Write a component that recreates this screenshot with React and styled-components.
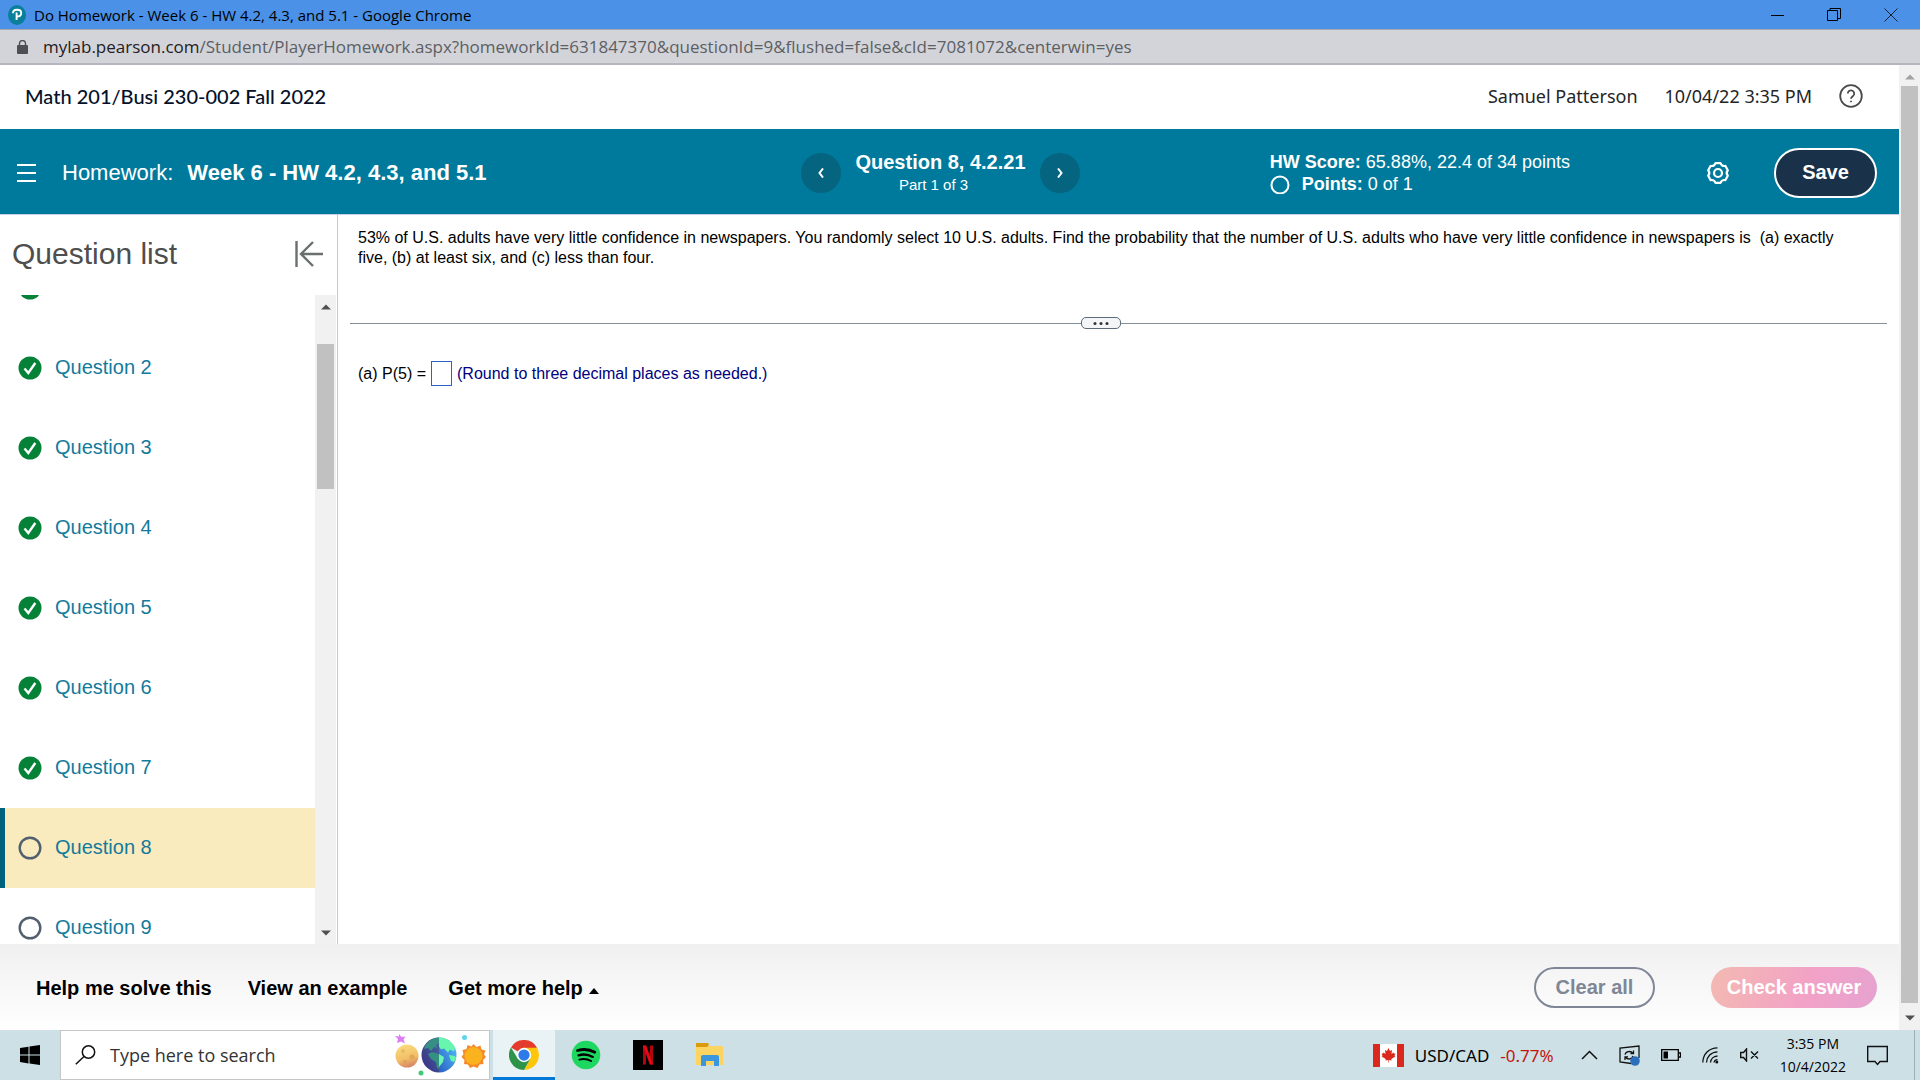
import { useLayoutEffect, useRef } from "react";
import styled, { createGlobalStyle } from "styled-components";

const questions = [
  { id: 1, done: true, clipped: true },
  { id: 2, done: true },
  { id: 3, done: true },
  { id: 4, done: true },
  { id: 5, done: true },
  { id: 6, done: true },
  { id: 7, done: true },
  { id: 8, current: true },
  { id: 9 },
];

function TitleBar() {
  return (
    <TitleRow>
      <svg width="18" height="20" viewBox="0 0 18 20">
        <ellipse cx="9" cy="10" rx="9" ry="10" fill="#0a7f9c" />
        <path d="M5 8.200C5 5.500 7 4.800 9 4.800c2.600 0 4.200 1.200 4.200 3.200 0 2.200-1.900 3.600-4.600 3.600M8.600 7.500V15" fill="none" stroke="#fff" strokeWidth="1.900" />
      </svg>
      <span>Do Homework - Week 6 - HW 4.2, 4.3, and 5.1 - Google Chrome</span>
      <WindowButtons>
        <IconButton aria-label="Minimize">
          <svg width="14" height="14" viewBox="0 0 14 14"><path d="M1 7.500h13" stroke="#000" /></svg>
        </IconButton>
        <IconButton aria-label="Restore">
          <svg width="14" height="14" viewBox="0 0 14 14" fill="none" stroke="#000"><path d="M.5 2.500h10v10H.5zM3 2V.500h10.500V10.500H11" /></svg>
        </IconButton>
        <IconButton aria-label="Close">
          <svg width="14" height="14" viewBox="0 0 14 14"><path d="M.5.500l13 13M13.500.500l-13 13" stroke="#123" /></svg>
        </IconButton>
      </WindowButtons>
    </TitleRow>
  );
}

function AddressBar() {
  return (
    <AddressRow>
      <svg width="11" height="14" viewBox="0 0 11 14">
        <rect y="5" width="11" height="9" rx="1" fill="#4c4f53" />
        <path d="M2.500 5.500V3.500a3 3 0 0 1 6 0v2" fill="none" stroke="#4c4f53" strokeWidth="1.400" />
      </svg>
      <p>
        <b>mylab.pearson.com</b>
        /Student/PlayerHomework.aspx?homeworkId=631847370&amp;questionId=9&amp;flushed=false&amp;cId=7081072&amp;centerwin=yes
      </p>
    </AddressRow>
  );
}

function CourseHeader() {
  return (
    <CourseRow>
      <Course>Math 201/Busi 230-002 Fall 2022</Course>
      <UserInfo>
        <span>Samuel Patterson</span>
        <span>10/04/22 3:35 PM</span>
        <IconButton aria-label="Help">
          <svg width="24" height="24" viewBox="0 0 24 24" fill="none" stroke="#4a4a4a" strokeWidth="1.800">
            <circle cx="12" cy="12" r="10.800" />
            <path d="M8.800 9.500a3.200 3.200 0 1 1 5 2.700c-1.200.8-1.800 1.200-1.800 2.600" />
            <circle cx="12" cy="17.500" r=".6" fill="#4a4a4a" strokeWidth="1" />
          </svg>
        </IconButton>
      </UserInfo>
    </CourseRow>
  );
}

function HomeworkBar() {
  return (
    <Band>
      <BandLeft>
        <IconButton aria-label="Menu">
          <svg width="19" height="18" viewBox="0 0 19 18" stroke="#fff" strokeWidth="2"><path d="M0 1h19M0 9h19M0 17h19" /></svg>
        </IconButton>
        <h1>
          <span>Homework:</span> Week 6 - HW 4.2, 4.3, and 5.1
        </h1>
      </BandLeft>
      <Pager>
        <RoundButton aria-label="Previous question">
          <svg width="8" height="10" viewBox="0 0 8 10"><path d="M6 .5L2.500 5 6 9.500" fill="none" stroke="#fff" strokeWidth="2" /></svg>
        </RoundButton>
        <PagerText>
          <strong>Question 8, 4.2.21</strong>
          <small>Part 1 of 3</small>
        </PagerText>
        <RoundButton aria-label="Next question">
          <svg width="8" height="10" viewBox="0 0 8 10"><path d="M2 .5L5.500 5 2 9.500" fill="none" stroke="#fff" strokeWidth="2" /></svg>
        </RoundButton>
      </Pager>
      <BandRight>
        <Score>
          <p><b>HW Score:</b> 65.88%, 22.4 of 34 points</p>
          <Points>
            <svg width="20" height="20" viewBox="0 0 20 20"><circle cx="10" cy="11" r="8.500" fill="none" stroke="#fff" strokeWidth="2" /></svg>
            <span><b>Points:</b> 0 of 1</span>
          </Points>
        </Score>
        <IconButton aria-label="Settings">
          <svg width="24" height="24" viewBox="0 0 24 24" fill="none" stroke="#fff" strokeWidth="2.200" strokeLinejoin="round">
            <path d="M9.530 2.100H14.470Q15.750 5.500 19.340 4.910L21.800 9.190Q19.500 12 21.800 14.810L19.340 19.090Q15.750 18.500 14.470 21.900H9.530Q8.250 18.500 4.660 19.090L2.200 14.810Q4.500 12 2.200 9.190L4.660 4.910Q8.250 5.500 9.530 2.100z" />
            <circle cx="12" cy="12" r="4" />
          </svg>
        </IconButton>
        <SaveButton>Save</SaveButton>
      </BandRight>
    </Band>
  );
}

function Status({ done }) {
  return (
    <svg width="24" height="24" viewBox="0 0 24 24">
      {done ? (
        <>
          <circle cx="12" cy="12" r="11.500" fill="#058238" />
          <path d="M6.500 12.500l3.800 4.500 7-10" fill="none" stroke="#fff" strokeWidth="2.400" />
        </>
      ) : (
        <circle cx="12" cy="12" r="10.300" fill="none" stroke="#525f6e" strokeWidth="2.400" />
      )}
    </svg>
  );
}

function Scrollbar({ before, thumb, after, muted, inset }) {
  return (
    <Track $inset={inset}>
      <svg width="10" height="6" viewBox="0 0 10 6"><path d="M0 5.500L5 .5l5 5z" fill={muted ? "#a3a3a3" : "#505050"} /></svg>
      <Rail>
        <Gap $grow={before} />
        <Thumb $grow={thumb} />
        <Gap $grow={after} />
      </Rail>
      <svg width="10" height="6" viewBox="0 0 10 6"><path d="M0 .5l5 5 5-5z" fill="#505050" /></svg>
    </Track>
  );
}

function QuestionList() {
  const list = useRef(null);

  // question 1 is mostly scrolled out of view
  useLayoutEffect(() => {
    list.current.scrollTop = 47;
  }, []);

  return (
    <Sidebar>
      <SidebarHead>
        <h2>Question list</h2>
        <IconButton aria-label="Collapse question list">
          <svg width="28" height="26" viewBox="0 0 28 26" fill="none" stroke="#6a7070" strokeWidth="2.400"><path d="M1.500 0v26M28 13H6M18 1L6 13l12 12" /></svg>
        </IconButton>
      </SidebarHead>
      <ListArea>
        <List ref={list}>
          {questions.map((q) => (
            <Item key={q.id} $current={q.current}>
              <Status done={q.done} />
              {!q.clipped && <a href={"#question-" + q.id}>Question {q.id}</a>}
            </Item>
          ))}
        </List>
        <Scrollbar before={28} thumb={145} after={436} inset />
      </ListArea>
    </Sidebar>
  );
}

function Exercise() {
  return (
    <Pane>
      <Prompt>
        53% of U.S. adults have very little confidence in newspapers. You randomly select 10 U.S. adults. Find the probability that the number of U.S. adults who have very little confidence in newspapers is&nbsp; (a) exactly five, (b) at least six, and (c) less than four.
      </Prompt>
      <Divider>
        <Line $grow={731} />
        <Handle aria-label="Resize">
          <svg width="16" height="3" viewBox="0 0 16 3" fill="#333"><circle cx="2" cy="1.500" r="1.500" /><circle cx="8" cy="1.500" r="1.500" /><circle cx="14" cy="1.500" r="1.500" /></svg>
        </Handle>
        <Line $grow={766} />
      </Divider>
      <Answer>
        <label htmlFor="answer">(a) P(5) =</label>
        <input id="answer" type="text" />
        <span>(Round to three decimal places as needed.)</span>
      </Answer>
    </Pane>
  );
}

function HelpBar() {
  return (
    <Footer>
      <TextButton>Help me solve this</TextButton>
      <TextButton>View an example</TextButton>
      <MenuButton>
        Get more help
        <svg width="10" height="6" viewBox="0 0 10 6"><path d="M0 6l5-6 5 6z" /></svg>
      </MenuButton>
      <FooterActions>
        <ClearButton>Clear all</ClearButton>
        <CheckButton>Check answer</CheckButton>
      </FooterActions>
    </Footer>
  );
}

function Planets() {
  return (
    <svg width="92" height="44" viewBox="0 0 92 44">
      <defs>
        <linearGradient id="night" x1="0" y1="1" x2="1" y2="0">
          <stop offset="0" stopColor="#3b2a80" />
          <stop offset="1" stopColor="#41699f" />
        </linearGradient>
        <linearGradient id="day" x1="0" y1="1" x2="1" y2="0">
          <stop offset="0" stopColor="#2c5fc4" />
          <stop offset="1" stopColor="#55c4fb" />
        </linearGradient>
        <linearGradient id="moon" x1=".3" y1="0" x2=".6" y2="1">
          <stop offset="0" stopColor="#fcdc7c" />
          <stop offset=".6" stopColor="#f2bf68" />
          <stop offset="1" stopColor="#d58165" />
        </linearGradient>
      </defs>
      <path d="M5 1l2.500 3 4-.5-2 3 1.500 4-4-2-4 1.500 1-4-3-3 4 .5z" fill="#dd7cf5" />
      <circle cx="13" cy="23" r="11.500" fill="url(#moon)" />
      <circle cx="9" cy="18" r="2" fill="#e9b95d" />
      <circle cx="18" cy="24" r="2.500" fill="#e2a855" />
      <circle cx="11" cy="29" r="2" fill="#dfa05a" />
      <path d="M45 4.500a17.500 17.500 0 0 0 0 35z" fill="url(#night)" />
      <path d="M45 4.500a17.500 17.500 0 0 1 0 35z" fill="url(#day)" />
      <path d="M31 13c3-5 8-8 14-8.500V10l-3 2 1 3-3-1-3 4-3-3-4 1zM34 21l4-2 7 2v15l-2-1-1-6-5-3z" fill="#358f83" />
      <path d="M45 4.500c7 0 13 4 16 10l-1 4-4-2-2 3-4-4-3 1-2-3zM45 21l5 3-1 5-4 5zM55 22l6 1 1 2-2 4-3-1z" fill="#68f5ae" />
      <path d="M79.500 11l3 3 4-1.500 1 4 4 1-1.500 4 2 2.500-3 3 .5 4-4 .5-2 3.500-4-1.500-3.500 1.500-2-3.500-4-.5.500-4-3-3 2-3-1-4 4-1 1-4 4 1.500z" fill="#f48a2b" />
      <circle cx="79.500" cy="23" r="9" fill="#fbb21f" />
      <circle cx="70.500" cy="4.500" r="2.500" fill="#5fd3ea" />
      <circle cx="27" cy="40" r="2.500" fill="#3fcb76" />
    </svg>
  );
}

function Taskbar() {
  return (
    <Tasks>
      <StartButton aria-label="Start">
        <svg width="20" height="20" viewBox="0 0 20 20"><path d="M0 3l8.500-1.300v7.900H0zM9.500 1.500L20 0v9.600H9.500zM0 10.500h8.500v7.900L0 17zM9.500 10.500H20V20L9.500 18.500z" /></svg>
      </StartButton>
      <Search>
        <svg width="21" height="20" viewBox="0 0 21 20" fill="none" stroke="#111" strokeWidth="1.500"><circle cx="13.500" cy="7" r="6.200" /><path d="M9 11.500L.8 19.300" /></svg>
        <input type="text" aria-label="Search" placeholder="Type here to search" />
        <Planets />
      </Search>
      <AppButton aria-label="Chrome" $active>
        <svg width="30" height="30" viewBox="0 0 48 48">
          <path d="M24 24L3.200 12A24 24 0 0 1 44.800 12z" fill="#e33b2e" />
          <path d="M24 12.500H45A24 24 0 0 1 24 48L34 30z" fill="#fdc60b" />
          <path d="M34 30L24 48A24 24 0 0 1 3.200 12L14 30z" fill="#2d9348" />
          <circle cx="24" cy="24" r="11.500" fill="#fff" />
          <circle cx="24" cy="24" r="9" fill="#2c7be9" />
        </svg>
      </AppButton>
      <AppButton aria-label="Spotify">
        <svg width="30" height="30" viewBox="0 0 30 30">
          <circle cx="15" cy="15" r="14.300" fill="#1ed760" />
          <g fill="none" stroke="#000" strokeLinecap="round">
            <path d="M6.500 10.500c6-1.700 12-1.200 17.300 1.700" strokeWidth="2.800" />
            <path d="M7.500 15.300c5-1.400 10-.8 14.300 1.600" strokeWidth="2.300" />
            <path d="M8.300 19.600c4.300-1 8.300-.6 11.800 1.400" strokeWidth="1.900" />
          </g>
        </svg>
      </AppButton>
      <AppButton aria-label="Netflix">
        <svg width="30" height="30" viewBox="0 0 30 30">
          <path d="M0 0h30v30H0z" />
          <path d="M11.500 5.500v19M18.500 5.500v19" stroke="#b1060f" strokeWidth="3" />
          <path d="M10 5.500h3.200l6.800 19h-3.200z" fill="#e50914" />
        </svg>
      </AppButton>
      <AppButton aria-label="File Explorer">
        <svg width="30" height="26" viewBox="0 0 30 26">
          <path d="M1 2h11l2 2h14v19H1z" fill="#fcd462" />
          <path d="M1 1h12l1 2-2 2H1z" fill="#d99a0b" />
          <path d="M6 24V15q0-2 2-2h14q2 0 2 2v9h-5v-5h-8v5z" fill="#3a96dd" />
        </svg>
      </AppButton>
      <Tray>
        <Currency>
          <svg width="31" height="23" viewBox="0 0 31 23">
            <path d="M0 0h31v23H0z" fill="#fff" />
            <path d="M0 0h7v23H0zM24 0h7v23h-7z" fill="#da291c" />
            <path d="M15.500 4l1.500 3 2-1-.5 4 2-1.500.5 1 1.500.2-1 2 .8.800-4 2.500.2 1.500-2.700-.5v2.500h-.6V16l-2.700.5.2-1.500-4-2.500.8-.8-1-2 1.500-.2.500-1 2 1.500-.5-4 2 1z" fill="#da291c" />
          </svg>
          <span>USD/CAD</span>
          <em>-0.77%</em>
        </Currency>
        <IconButton aria-label="Show hidden icons">
          <svg width="17" height="10" viewBox="0 0 17 10"><path d="M1 9l7.500-7.500L16 9" fill="none" stroke="#111" strokeWidth="1.500" /></svg>
        </IconButton>
        <IconButton aria-label="Updates">
          <svg width="21" height="21" viewBox="0 0 21 21" fill="none" stroke="#111" strokeWidth="1.300">
            <path d="M12 18.500L1 17V3l19-2v12M6 9.500C7 6 12 5.500 14 8.500M14.500 5.500v3.200h-3M14 11c-1 3.500-5 4-7.500 1.200M6 15v-3.200h3" />
            <circle cx="16" cy="16" r="4.800" fill="#2a6fbb" stroke="none" />
          </svg>
        </IconButton>
        <IconButton aria-label="Battery">
          <svg width="20" height="12" viewBox="0 0 20 12"><path d="M.7.700h16.600v10.600H.7zM18 4h1.500v4H18" fill="none" stroke="#000" strokeWidth="1.300" /><path d="M2.500 2.500H7v7H2.500z" /></svg>
        </IconButton>
        <IconButton aria-label="Network">
          <svg width="17" height="17" viewBox="0 0 17 17" fill="none" stroke="#111" strokeWidth="1.300">
            <path d="M.8 15.500C1 7 7 1 15.500.8M4.500 15.500C4.800 9.500 9 5 15.500 4.800M8.500 15.500c.3-3.500 3-6.300 7-6.500M12 15.500c.2-1.500 1.500-2.700 3.500-2.800" />
            <circle cx="14.800" cy="15" r="1.500" fill="#111" stroke="none" />
          </svg>
        </IconButton>
        <IconButton aria-label="Volume muted">
          <svg width="19" height="14" viewBox="0 0 19 14" fill="none" stroke="#111" strokeWidth="1.400"><path d="M6.500 1v12L3.500 9.500H.7v-5h2.800zM11 3.500l7 7M18 3.500l-7 7" /></svg>
        </IconButton>
        <Clock>
          <span>3:35 PM</span>
          <span>10/4/2022</span>
        </Clock>
        <IconButton aria-label="Notifications">
          <svg width="21" height="21" viewBox="0 0 21 21"><path d="M.7 1.500h19.600v15H13l-2.500 3-2.500-3H.7z" fill="none" stroke="#111" strokeWidth="1.400" /></svg>
        </IconButton>
        <ShowDesktop aria-label="Show desktop" />
      </Tray>
    </Tasks>
  );
}

function App() {
  return (
    <Screen>
      <GlobalStyle />
      <TitleBar />
      <AddressBar />
      <Viewport>
        <Page>
          <CourseHeader />
          <HomeworkBar />
          <Main>
            <QuestionList />
            <Exercise />
          </Main>
          <HelpBar />
        </Page>
        <Scrollbar before={0} thumb={917} after={6} muted />
      </Viewport>
      <Taskbar />
    </Screen>
  );
}

export default App;

const GlobalStyle = createGlobalStyle`
  *{
    box-sizing: border-box;
  }

  body{
    margin: 0;
    font-family: "Liberation Sans", Arial, sans-serif;
    color: #000;
  }

  button, input{
    font: inherit;
    color: inherit;
    padding: 0;
    border: none;
    background: none;
  }

  svg{
    display: block;
    flex: none;
  }

  h1, h2, p, ul{
    margin: 0;
    padding: 0;
  }
`;

const Screen = styled.div`
  height: 100vh;
  display: flex;
  flex-direction: column;
  background: #fff;
`;

const IconButton = styled.button`
  display: flex;
  align-items: center;
  justify-content: center;
`;

const TitleRow = styled.header`
  height: 29px;
  flex: none;
  display: flex;
  align-items: center;
  gap: 8px;
  padding: 0 22px 0 8px;
  background: #4a91e7;
  font-family: "Open Sans", sans-serif;
  font-size: 15px;
`;

const WindowButtons = styled.div`
  margin-left: auto;
  display: flex;
  gap: 43px;
`;

const AddressRow = styled.div`
  height: 36px;
  flex: none;
  display: flex;
  align-items: center;
  gap: 15px;
  padding: 0 17px;
  background: #d3d4d9;
  border-top: 1px solid #a5a8ad;
  border-bottom: 2px solid #b5b6c0;
  font-family: "Open Sans", sans-serif;
  font-size: 17px;
  color: #5c5f64;

  b{
    font-weight: normal;
    color: #1f2023;
  }
`;

const Viewport = styled.div`
  flex: 1;
  min-height: 0;
  display: flex;
`;

const Page = styled.div`
  flex: 1;
  min-width: 0;
  display: flex;
  flex-direction: column;
`;

const Track = styled.div`
  width: 21px;
  flex: none;
  display: flex;
  flex-direction: column;
  align-items: center;
  gap: 6px;
  padding: ${(props) => (props.$inset ? "9px 0 8px" : "9px 0")};
  background: #f1f1f1;
`;

const Rail = styled.div`
  width: 17px;
  flex: 1;
  display: flex;
  flex-direction: column;
`;

const Gap = styled.div`
  flex: ${(props) => props.$grow} 0 0;
`;

const Thumb = styled(Gap)`
  background: #c1c1c1;
`;

const CourseRow = styled.div`
  height: 64px;
  flex: none;
  display: flex;
  align-items: center;
  justify-content: space-between;
  padding: 0 36px 2px 25px;
`;

const Course = styled.div`
  font-family: Lato, sans-serif;
  font-size: 20px;
  font-weight: 500;
  color: #05112a;
`;

const UserInfo = styled.div`
  display: flex;
  align-items: center;
  gap: 27px;
  font-family: "Noto Sans", sans-serif;
  font-size: 18px;
  color: #252525;
`;

const Band = styled.div`
  height: 86px;
  flex: none;
  display: flex;
  align-items: center;
  padding: 2px 22px 0 17px;
  background: #007a9c;
  border-bottom: 1px solid #c7cede;
  color: #fff;
`;

const BandLeft = styled.div`
  flex: 784 0 0;
  display: flex;
  align-items: center;
  gap: 26px;

  h1{
    font-size: 22px;
    font-weight: bold;
  }

  span{
    font-weight: normal;
    margin-right: 8px;
  }
`;

const Pager = styled.div`
  display: flex;
  align-items: center;
  gap: 14px;
`;

const RoundButton = styled(IconButton)`
  width: 40px;
  height: 40px;
  border-radius: 50%;
  background: #05647f;
`;

const PagerText = styled.div`
  display: flex;
  flex-direction: column;
  align-items: center;

  strong{
    font-size: 20px;
    line-height: 24px;
  }

  small{
    padding-right: 14px;
    font-size: 15px;
    line-height: 22px;
  }
`;

const BandRight = styled.div`
  flex: 797 0 0;
  display: flex;
  align-items: center;
  justify-content: flex-end;
  gap: 44px;
`;

const Score = styled.div`
  margin-right: 92px;
  font-size: 18px;
  line-height: 22px;
`;

const Points = styled.div`
  display: flex;
  align-items: center;
  gap: 12px;
`;

const SaveButton = styled.button`
  width: 103px;
  height: 50px;
  border: 2px solid #fff;
  border-radius: 25px;
  background: #19324a;
  font-size: 20px;
  font-weight: bold;
`;

const Main = styled.div`
  flex: 1;
  min-height: 0;
  display: flex;
`;

const Sidebar = styled.aside`
  width: 338px;
  flex: none;
  display: flex;
  flex-direction: column;
  border-right: 1px solid #c7c7d1;
`;

const SidebarHead = styled.div`
  height: 80px;
  flex: none;
  display: flex;
  align-items: center;
  justify-content: space-between;
  padding: 0 14px 2px 12px;

  h2{
    font-size: 30px;
    font-weight: normal;
    color: #4e4e4e;
  }
`;

const ListArea = styled.div`
  flex: 1;
  min-height: 0;
  display: flex;
  padding-right: 1px;
`;

const List = styled.ul`
  flex: 1;
  overflow: hidden;
  list-style: none;
`;

const Item = styled.li`
  height: 80px;
  display: flex;
  align-items: center;
  gap: 13px;
  padding-left: 13px;
  border-left: 5px solid ${(props) => (props.$current ? "#00637e" : "transparent")};
  background: ${(props) => (props.$current ? "#f9ebbd" : "#fff")};

  a{
    padding-bottom: 2px;
    font-size: 20px;
    color: #137a9c;
    text-decoration: none;
  }
`;

const Pane = styled.main`
  flex: 1;
  min-width: 0;
  padding: 13px 12px 0;
  font-size: 16px;
`;

const Prompt = styled.p`
  padding: 0 24px 0 8px;
  line-height: 20px;
`;

const Divider = styled.div`
  display: flex;
  align-items: center;
  margin-top: 49px;
`;

const Line = styled.div`
  flex: ${(props) => props.$grow} 0 0;
  height: 1px;
  background: #84909c;
`;

const Handle = styled(IconButton)`
  width: 40px;
  height: 12px;
  border: 1px solid #5d6b7a;
  border-radius: 5px;
  background: #f3f5f7;
`;

const Answer = styled.div`
  display: flex;
  align-items: center;
  gap: 5px;
  margin-top: 32px;
  padding: 0 8px;

  input{
    width: 21px;
    height: 25px;
    border: 1px solid #2b62c9;
  }

  span{
    color: #000080;
  }
`;

const Footer = styled.footer`
  height: 86px;
  flex: none;
  display: flex;
  align-items: center;
  gap: 36px;
  padding: 1px 22px 0 36px;
  background: linear-gradient(#f0f0f0, #fff);
`;

const TextButton = styled.button`
  display: flex;
  align-items: center;
  gap: 6px;
  padding-top: 2px;
  font-size: 20px;
  font-weight: bold;
`;

const MenuButton = styled(TextButton)`
  padding-left: 5px;

  svg{
    margin-top: 4px;
  }
`;

const FooterActions = styled.div`
  margin-left: auto;
  display: flex;
  gap: 56px;
`;

const ClearButton = styled.button`
  width: 121px;
  height: 41px;
  border: 2px solid #7f8796;
  border-radius: 21px;
  font-size: 20px;
  font-weight: bold;
  color: #7f8796;
`;

const CheckButton = styled.button`
  width: 166px;
  height: 41px;
  border-radius: 21px;
  background: linear-gradient(110deg, #f3bab1, #f2a1c7 60%, #e5a3d0);
  font-size: 20px;
  font-weight: bold;
  color: #fff;
`;

const Tasks = styled.nav`
  height: 50px;
  flex: none;
  display: flex;
  background: #cce0e6;
  font-family: "Noto Sans", sans-serif;
`;

const StartButton = styled(IconButton)`
  width: 60px;
`;

const Search = styled.label`
  width: 430px;
  display: flex;
  align-items: center;
  gap: 14px;
  padding: 0 3px 0 14px;
  margin-right: 3px;
  border: 1px solid #c6c6c6;
  background: #fff;

  input{
    flex: 1;
    min-width: 0;
    font-family: "Open Sans", sans-serif;
    font-size: 18px;
    outline: none;
  }

  input::placeholder{
    color: #333;
    opacity: 1;
  }
`;

const AppButton = styled(IconButton)`
  width: 62px;
  border-bottom: 3px solid ${(props) => (props.$active ? "#0078d7" : "transparent")};
  border-top: 3px solid transparent;
  background: ${(props) => (props.$active ? "#e9f2f4" : "none")};
`;

const Tray = styled.div`
  margin-left: auto;
  display: flex;
  align-items: center;
  gap: 21px;
`;

const Currency = styled.div`
  display: flex;
  align-items: center;
  gap: 11px;
  margin-right: 6px;
  font-size: 17px;

  em{
    font-style: normal;
    color: #c4150c;
  }
`;

const Clock = styled.div`
  display: flex;
  flex-direction: column;
  align-items: center;
  font-family: "Open Sans", sans-serif;
  font-size: 14px;
  line-height: 23px;
`;

const ShowDesktop = styled.button`
  width: 6px;
  height: 50px;
  margin-left: 5px;
  border-left: 1px solid #9db0b8;
`;
